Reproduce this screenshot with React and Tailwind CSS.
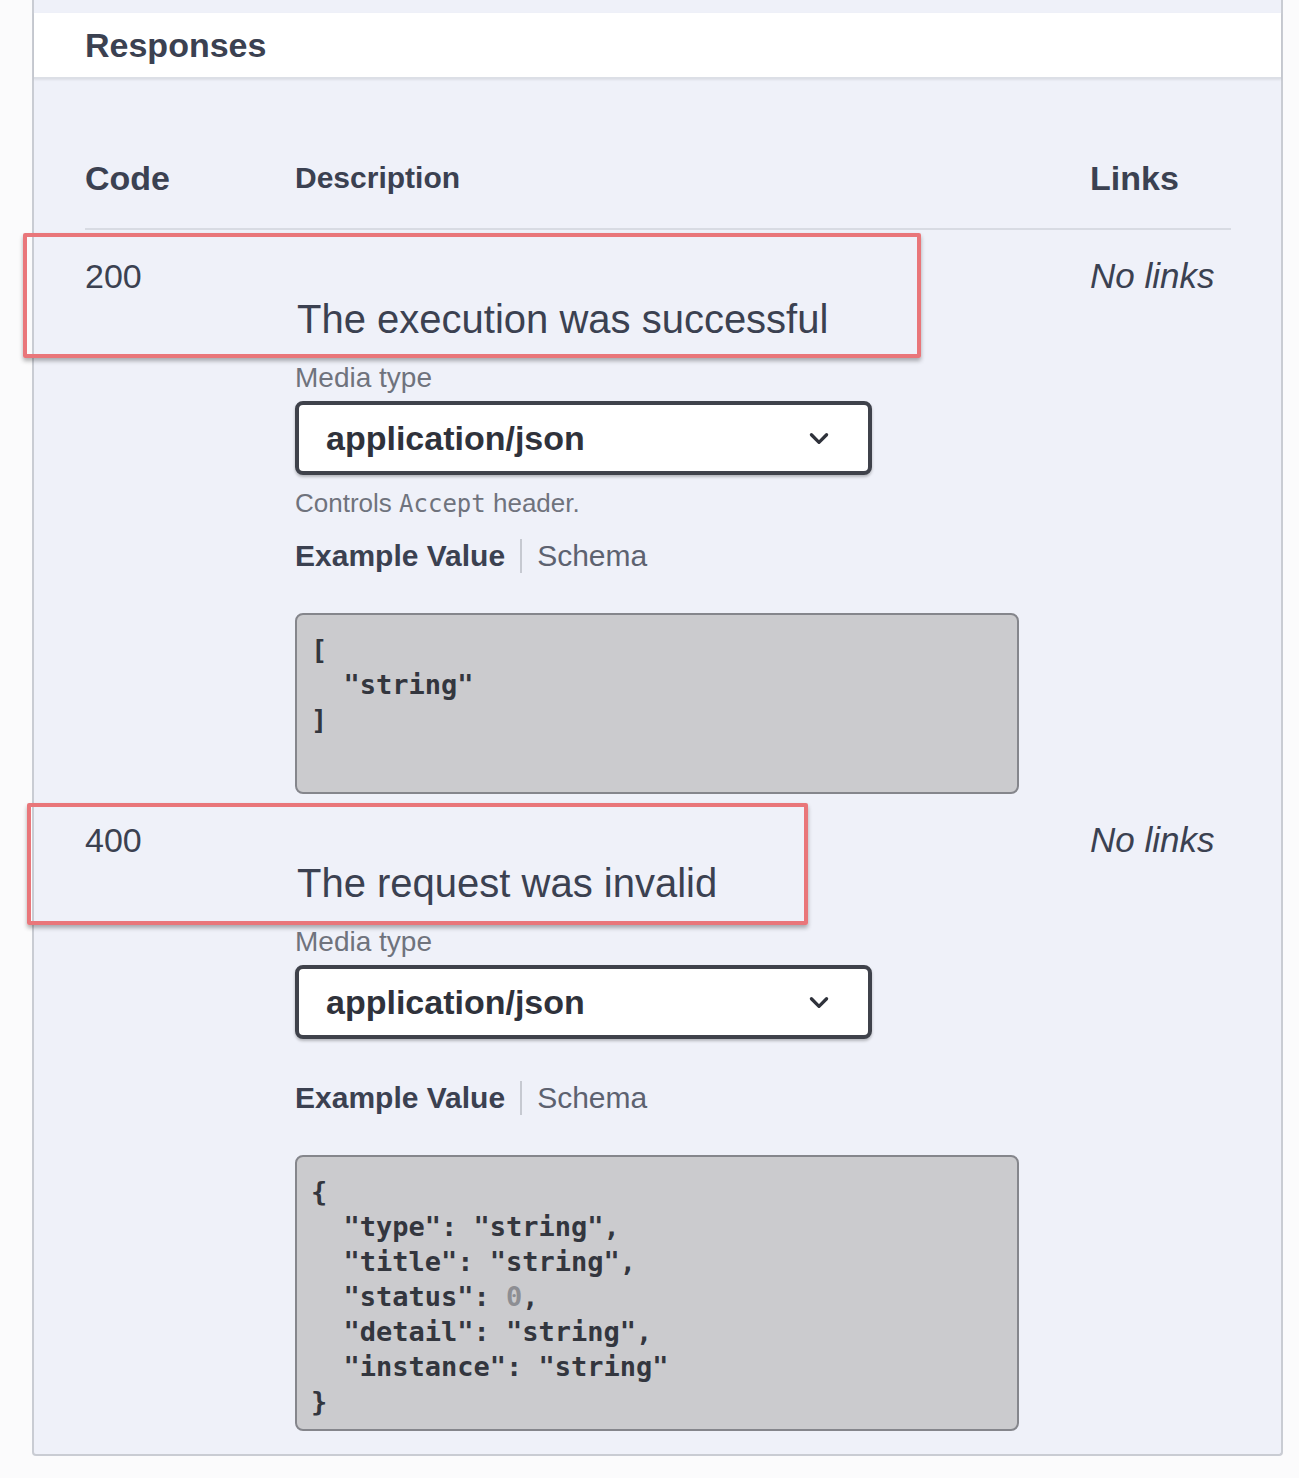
import { useState } from 'react'

const sans = { fontFamily: '"Liberation Sans", Arial, sans-serif' }
const mono = { fontFamily: '"DejaVu Sans Mono", "Liberation Mono", monospace' }

function Chevron() {
  return (
    <svg width="26" height="26" viewBox="0 0 24 24" fill="none" stroke="#2f323b" strokeWidth="3" strokeLinecap="round" strokeLinejoin="round" aria-hidden="true">
      <polyline points="5,9 12,16 19,9" />
    </svg>
  )
}

function MediaSelect() {
  return (
    <div className="w-[577px] h-[74px] border-[4px] border-[#3f424b] rounded-[8px] bg-white flex items-center justify-between pl-[27px] pr-[36px] shadow-[0_2px_3px_rgba(0,0,0,0.25)]">
      <span className="text-[34px] font-bold text-[#2f323b]">application/json</span>
      <Chevron />
    </div>
  )
}

function ExampleTabs() {
  const [tab, setTab] = useState('example')
  return (
    <div className="flex items-center h-[36px] text-[30px] leading-[36px]">
      <button
        onClick={() => setTab('example')}
        className={tab === 'example' ? 'font-bold text-[#3b4151]' : 'text-[#5d6270]'}
      >
        Example Value
      </button>
      <span className="w-[2px] h-[34px] bg-[#c6c9d1] mx-[15px]" />
      <button
        onClick={() => setTab('schema')}
        className={tab === 'schema' ? 'font-bold text-[#3b4151]' : 'text-[#5d6270]'}
      >
        Schema
      </button>
    </div>
  )
}

function CodeBox({ lines, className }) {
  return (
    <pre
      className={`w-[724px] bg-[#cbcbce] border-2 border-[#85868c] rounded-[8px] pl-[14px] pt-[17px] text-[27px] leading-[35px] font-bold text-[#33363e] ${className}`}
      style={mono}
    >
      {lines.map((l, i) => (
        <div key={i}>{l}</div>
      ))}
    </pre>
  )
}

function RedBox({ className }) {
  return (
    <div className={`absolute border-[4px] border-[#e9767a] rounded-[2px] shadow-[0_3px_4px_rgba(0,0,0,0.3)] pointer-events-none ${className}`} />
  )
}

function ResponseRow({ code, description, controls, codeLines, boxClass, redClass, tabsGap }) {
  return (
    <div className="relative flex">
      <RedBox className={redClass} />
      <div className="w-[210px] pt-[26px] text-[34px] leading-[40px] text-[#3b4151]">{code}</div>
      <div className="w-[795px] pt-[66px]">
        <div className="text-[40px] leading-[46px] text-[#3b4151] pl-[2px]">{description}</div>
        <div className="mt-[20px] text-[28px] leading-[32px] text-[#6f737d]">Media type</div>
        <div className="mt-[7px]">
          <MediaSelect />
        </div>
        {controls && (
          <div className="mt-[13px] text-[26px] leading-[30px] text-[#6f737d]">
            Controls <span style={mono} className="text-[24px]">Accept</span> header.
          </div>
        )}
        <div className={tabsGap}>
          <ExampleTabs />
        </div>
        <div className="mt-[39px]">
          <CodeBox lines={codeLines} className={boxClass} />
        </div>
      </div>
      <div className="w-[140px] pt-[26px] text-[35px] leading-[40px] italic text-[#3b4151]">No links</div>
    </div>
  )
}

export default function App() {
  return (
    <div className="w-[1299px] h-[1478px] bg-[#fbfbfc] overflow-hidden" style={sans}>
      <div className="ml-[32px] w-[1251px] border-x-2 border-b-2 border-[#c9ccd3] rounded-b-[4px] bg-[#eff1f9]">
        <div className="h-[13px] bg-[#eff1f9]" />
        <div className="h-[66px] bg-white border-b-2 border-[#dcdfe6] flex items-center pl-[51px] shadow-[0_1px_2px_rgba(0,0,0,0.08)]">
          <h4 className="text-[34px] font-bold text-[#3b4151]">Responses</h4>
        </div>
        <div className="pl-[51px] pr-[50px] pb-[23px]">
          <div className="flex pt-[79px] pb-[30px] border-b-2 border-[#d8dbe3] text-[#3b4151] font-bold">
            <div className="w-[210px] text-[34px] leading-[40px]">Code</div>
            <div className="w-[795px] text-[30px] leading-[40px]">Description</div>
            <div className="w-[140px] text-[34px] leading-[40px]">Links</div>
          </div>
          <ResponseRow
            code="200"
            description="The execution was successful"
            controls
            tabsGap="mt-[19px]"
            codeLines={['[', '  "string"', ']']}
            boxClass="h-[181px]"
            redClass="left-[-62px] top-[3px] w-[898px] h-[125px]"
          />
          <ResponseRow
            code="400"
            description="The request was invalid"
            tabsGap="mt-[41px]"
            codeLines={[
              '{',
              <>  "type": "string",</>,
              <>  "title": "string",</>,
              <>  "status": <span className="text-[#8d8e93]">0</span>,</>,
              <>  "detail": "string",</>,
              <>  "instance": "string"</>,
              '}',
            ]}
            boxClass="h-[276px]"
            redClass="left-[-58px] top-[9px] w-[781px] h-[122px]"
          />
        </div>
      </div>
    </div>
  )
}
